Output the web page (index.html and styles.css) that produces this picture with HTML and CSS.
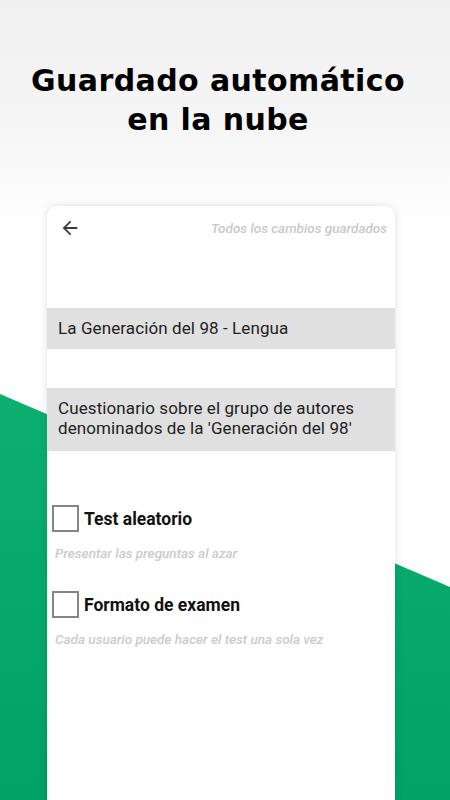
FILE: index.html
```html
<!DOCTYPE html>
<html lang="es">
<head>
  <meta charset="UTF-8" />
  <meta name="viewport" content="width=device-width, initial-scale=1.0"/>
  <title>Guardado automático</title>
  <link rel="stylesheet" href="styles.css">
</head>
<body>
<div class="screen">
  <!-- franja verde de fondo -->
  <svg class="band" width="450" height="800" viewBox="0 0 450 800">
    <defs>
      <linearGradient id="g" x1="0" y1="0" x2="0" y2="1">
        <stop offset="0" stop-color="#0bb06f"/>
        <stop offset="1" stop-color="#00a266"/>
      </linearGradient>
    </defs>
    <polygon points="0,394 450,587 450,800 0,800" fill="url(#g)"/>
  </svg>

  <h1 class="title">Guardado automático<br>en la nube</h1>

  <div class="card">
    <div class="topbar">
      <svg class="back" width="22" height="22" viewBox="0 0 24 24"><path d="M20 11H7.83l5.59-5.59L12 4l-8 8 8 8 1.41-1.41L7.83 13H20v-2z" fill="#3c3c3c"/></svg>
      <span class="saved">Todos los cambios guardados</span>
    </div>

    <div class="field first">La Generación del 98 - Lengua</div>
    <div class="field second">Cuestionario sobre el grupo de autores denominados de la 'Generación del 98'</div>

    <div class="option">
      <span class="box"></span>
      <span class="opt-label">Test aleatorio</span>
    </div>
    <div class="hint">Presentar las preguntas al azar</div>

    <div class="option">
      <span class="box"></span>
      <span class="opt-label">Formato de examen</span>
    </div>
    <div class="hint">Cada usuario puede hacer el test una sola vez</div>
  </div>
</div>
</body>
</html>
```

FILE: styles.css
```css
body {
  margin: 0;
  font-family: Roboto, "Liberation Sans", sans-serif;
}
.screen {
  position: relative;
  width: 450px;
  height: 800px;
  overflow: hidden;
  background: linear-gradient(#f0f0f0 0px, #f5f5f5 120px, #ffffff 230px, #ffffff 800px);
  display: flex;
  flex-direction: column;
}
.band {
  position: absolute;
  top: 0;
  left: 0;
}
.title {
  position: relative;
  margin: 61px 0 0 0;
  padding-right: 14px;
  font-family: "DejaVu Sans", Lato, sans-serif;
  font-weight: 700;
  font-size: 30px;
  line-height: 39px;
  letter-spacing: 0.4px;
  text-align: center;
  color: #000;
}
.card {
  position: relative;
  margin: 67px 0 0 47px;
  width: 348px;
  flex: 1;
  background: #fff;
  border-radius: 10px 10px 0 0;
  box-shadow: 0 0 8px rgba(0, 0, 0, 0.12);
}
.topbar {
  height: 44px;
  display: flex;
  align-items: center;
  justify-content: space-between;
  padding: 0 8px 0 12px;
}
.back {
  display: block;
}
.saved {
  font-size: 13.5px;
  font-style: italic;
  font-weight: 500;
  color: #c9c9c9;
}
.field {
  background: #e0e0e0;
  padding: 0 11px;
  font-size: 17px;
  letter-spacing: 0.1px;
  color: #222;
}
.field.first {
  margin-top: 58px;
  height: 41px;
  line-height: 41px;
}
.field.second {
  margin-top: 39px;
  padding-top: 10px;
  padding-bottom: 13px;
  line-height: 20px;
}
.option {
  display: flex;
  align-items: center;
  gap: 5px;
  padding-left: 5px;
  margin-top: 54px;
  height: 27px;
}
.option + .hint + .option {
  margin-top: 30px;
}
.box {
  width: 23px;
  height: 23px;
  border: 2px solid #858585;
}
.opt-label {
  font-size: 17.5px;
  font-weight: 700;
  color: #111;
}
.hint {
  margin-top: 13px;
  padding-left: 8px;
  font-size: 13.5px;
  line-height: 16px;
  font-style: italic;
  font-weight: 500;
  color: #cbcbcb;
}
```
